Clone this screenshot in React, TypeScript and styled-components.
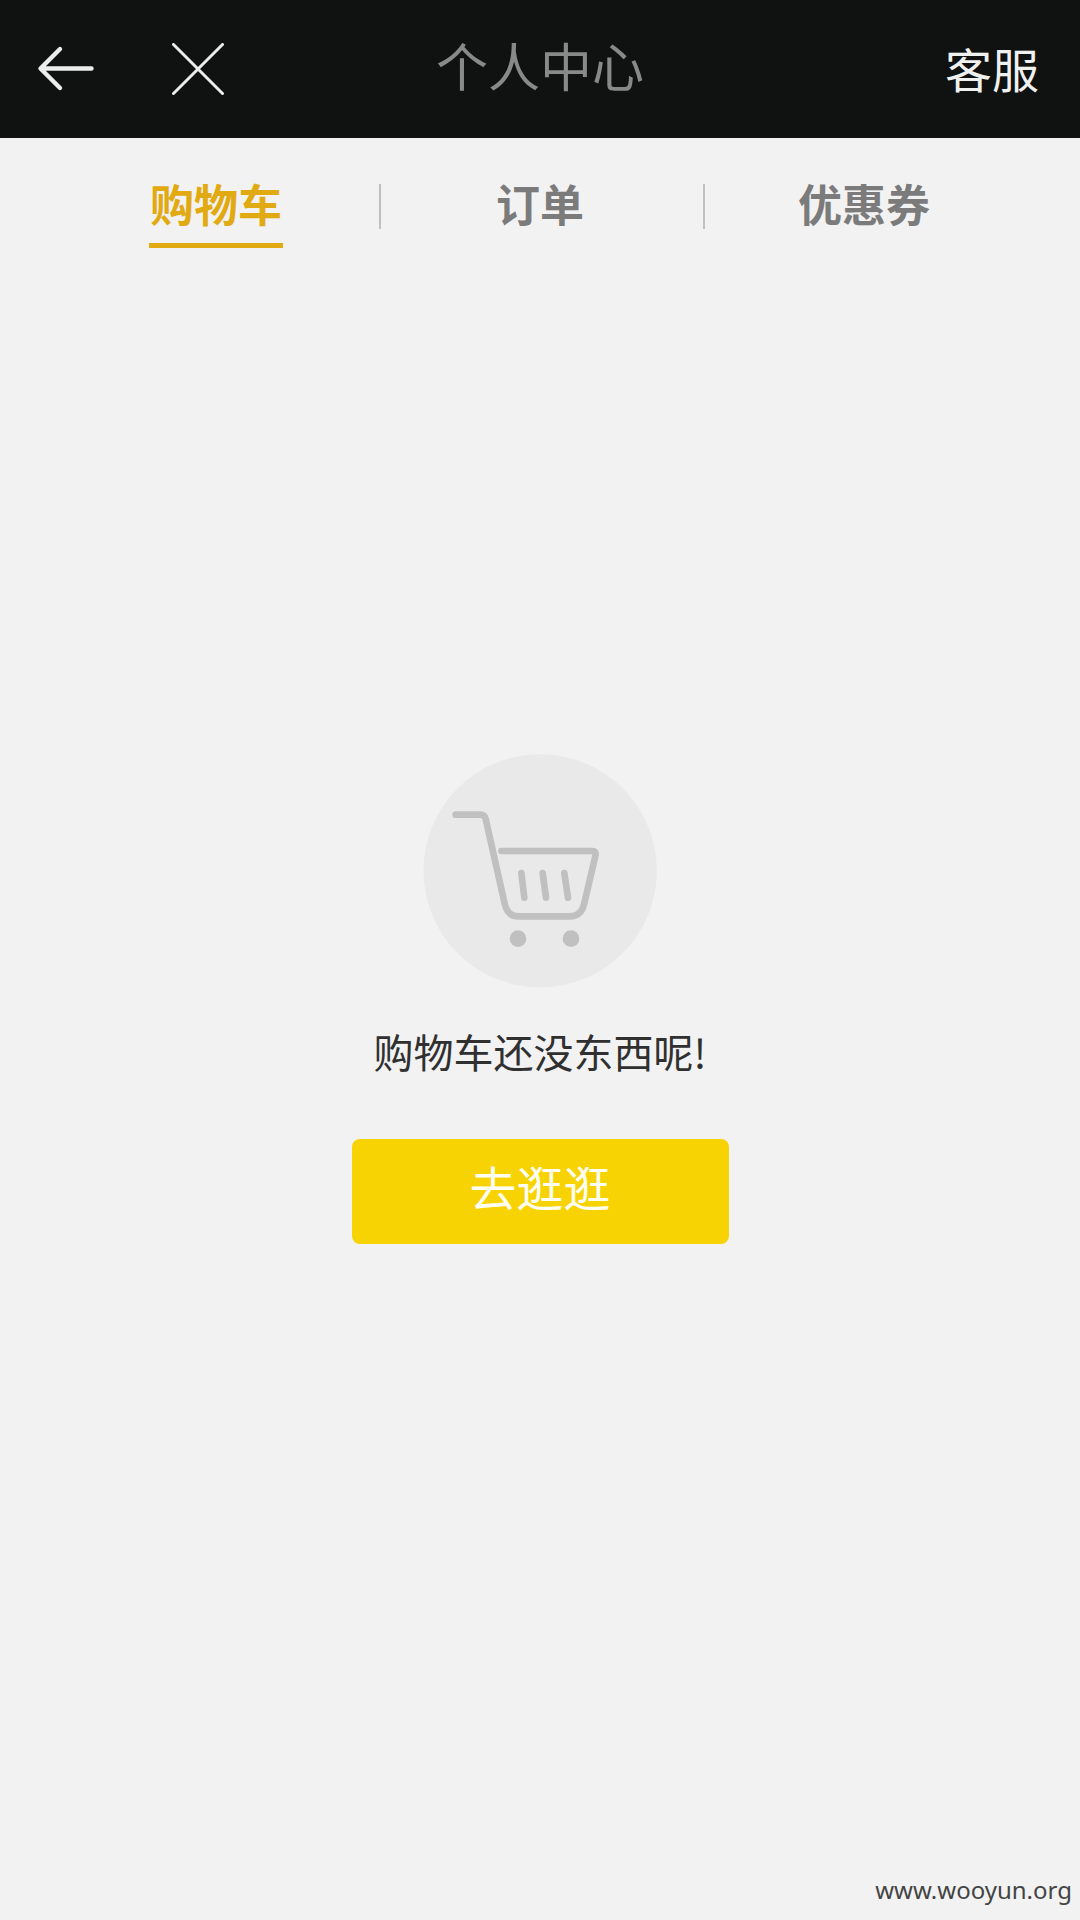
import React, { useState } from "react";
import styled, { createGlobalStyle } from "styled-components";

const GlobalStyle = createGlobalStyle`
  *, *::before, *::after { box-sizing: border-box; }
  body {
    margin: 0;
    background: #f2f2f2;
    font-family: "Noto Sans CJK SC", "Noto Sans", sans-serif;
  }
  button { font-family: inherit; }
`;

const Page = styled.div`
  display: flex;
  flex-direction: column;
  min-height: 100vh;
`;

const Header = styled.header`
  display: grid;
  grid-template-columns: 1fr auto 1fr;
  align-items: center;
  height: 138px;
  padding: 0 36px;
  background: #101211;
`;

const HeaderActions = styled.div`
  display: flex;
  align-items: center;
  gap: 76px;
`;

const IconButton = styled.button`
  display: flex;
  padding: 0;
  border: 0;
  background: none;
  color: #ececec;
  cursor: pointer;
`;

const Title = styled.h1`
  margin: 0;
  padding-bottom: 8px;
  color: #888a89;
  font-size: 52px;
  font-weight: 400;
  line-height: 76px;
`;

const ServiceLink = styled.a`
  justify-self: end;
  padding: 0 5px 3px 0;
  color: #eff1f0;
  font-size: 47px;
  line-height: 68px;
  text-decoration: none;
`;

const Tabs = styled.nav`
  display: grid;
  grid-template-columns: repeat(3, 1fr);
  padding: 36px 54px 0;
`;

const TabCell = styled.div`
  display: flex;
  justify-content: center;
  background: linear-gradient(#c0c0c0, #c0c0c0) no-repeat 1px 10px / 2px 45px;

  &:first-child { background: none; }
`;

const Tab = styled.button<{ $active: boolean }>`
  height: 74px;
  padding: 0 1px 11px;
  border: 0;
  border-bottom: 5px solid ${({ $active }) => ($active ? "#e2aa12" : "transparent")};
  background: none;
  color: ${({ $active }) => ($active ? "#e2aa12" : "#7b7b7b")};
  font-size: 44px;
  font-weight: 700;
  line-height: 58px;
  cursor: pointer;
`;

const EmptyCart = styled.main`
  display: flex;
  flex: 1;
  flex-direction: column;
  align-items: center;
  padding-top: 506px;
`;

const Message = styled.p`
  margin: 33px 0 58px;
  color: #303030;
  font-size: 40px;
  line-height: 60px;
`;

const BrowseButton = styled.button`
  width: 377px;
  height: 105px;
  padding: 0 0 12px;
  border: 0;
  border-radius: 8px;
  background: #f8d303;
  color: #fffff4;
  font-size: 47px;
  line-height: 68px;
  cursor: pointer;
`;

const Footer = styled.footer`
  padding: 0 8px 13px;
  color: #444;
  font-family: "Noto Sans", sans-serif;
  font-size: 24px;
  line-height: 34px;
  text-align: right;
`;

const BackIcon = () => (
  <svg width="60" height="60" viewBox="0 0 60 60" fill="none" stroke="currentColor" strokeWidth="4.4" strokeLinecap="round" strokeLinejoin="round" aria-hidden="true">
    <path d="M55.500 29.500H5M24 10L4.500 29.500L24 49" />
  </svg>
);

const CloseIcon = () => (
  <svg width="52" height="52" viewBox="0 0 52 52" fill="none" stroke="currentColor" strokeWidth="3" strokeLinecap="round" aria-hidden="true">
    <path d="M1.500 1.500L50.500 50.500M50.500 1.500L1.500 50.500" />
  </svg>
);

const CartIcon = () => (
  <svg width="234" height="234" viewBox="70 42 702 702" fill="none" stroke="#c0c0c0" strokeWidth="20" strokeLinecap="round" strokeLinejoin="round" aria-hidden="true">
    <circle cx="421.500" cy="392.500" r="350" fill="#e9e9e9" stroke="none" />
    <path d="M168 224H242Q255 224 258 237L316 495Q325 529 356 529H510Q543 529 552 497L588 344Q588 333 579 333H305" />
    <path d="M365 399L374 473M429 399L439 473M494 399L505 473" />
    <circle cx="355" cy="596" r="25" fill="#c0c0c0" stroke="none" />
    <circle cx="514" cy="596" r="25" fill="#c0c0c0" stroke="none" />
  </svg>
);

const tabNames = ["购物车", "订单", "优惠券"];

export default function App() {
  const [current, setCurrent] = useState(0);

  return (
    <Page>
      <GlobalStyle />
      <Header>
        <HeaderActions>
          <IconButton type="button" aria-label="返回"><BackIcon /></IconButton>
          <IconButton type="button" aria-label="关闭"><CloseIcon /></IconButton>
        </HeaderActions>
        <Title>个人中心</Title>
        <ServiceLink href="#service">客服</ServiceLink>
      </Header>
      <Tabs>
        {tabNames.map((name, i) => (
          <TabCell key={name}>
            <Tab type="button" $active={i === current} onClick={() => setCurrent(i)}>{name}</Tab>
          </TabCell>
        ))}
      </Tabs>
      <EmptyCart>
        <CartIcon />
        <Message>购物车还没东西呢!</Message>
        <BrowseButton type="button">去逛逛</BrowseButton>
      </EmptyCart>
      <Footer>www.wooyun.org</Footer>
    </Page>
  );
}
